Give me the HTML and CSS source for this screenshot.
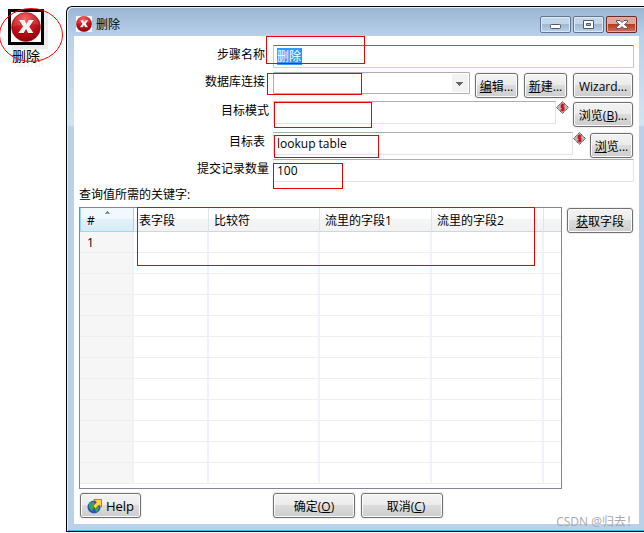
FILE: index.html
```html
<!DOCTYPE html>
<html lang="zh-CN">
<head>
<meta charset="utf-8">
<title>删除</title>
<link rel="stylesheet" href="styles.css">
</head>
<body>
<svg class="defs" width="0" height="0" aria-hidden="true">
  <defs>
    <radialGradient id="red" cx="45%" cy="25%" r="75%">
      <stop offset="0" stop-color="#ee5a50"/><stop offset=".45" stop-color="#d01820"/><stop offset="1" stop-color="#8c0008"/>
    </radialGradient>
    <symbol id="delete" viewBox="0 0 30 30">
      <rect width="30" height="30" fill="#fff"/>
      <circle cx="15" cy="15" r="14.5" fill="url(#red)" stroke="#a31a1c" stroke-width=".6"/>
      <path d="M2 15A13 13 0 0 1 28 13Q16 9 2 15Z" fill="#fff" opacity=".12"/>
      <path d="M8 9h6l2 3.400 2-3.400h5l-4.500 6.500L23 22h-6l-2-3.800L13 22H7.500l4.700-6.500Z" fill="#700" opacity=".6"/>
      <path d="M8 8h5.500l2 3.800 2.200-3.800H23l-4.700 6.700L22.500 21H17l-2-3.900-2.200 3.900H7.300l4.700-6.400Z" fill="#f4f4f4"/>
    </symbol>
    <symbol id="variable" viewBox="0 0 13 13">
      <path d="M6.500 .5 12.500 6.500 6.500 12.500 .5 6.500Z" fill="#b8b8b8" stroke="#555" stroke-dasharray="1.500 .6"/>
      <path d="M8.500 4H5.500v2.300h2.200V9H4.500M6.500 2.500v8" fill="none" stroke="#d00f16" stroke-width="1.500"/>
    </symbol>
  </defs>
</svg>
<div class="desktop">
  <aside class="step">
    <svg class="step-icon"><use href="#delete"/></svg>
    <span class="step-name">删除</span>
    <svg class="ring" viewBox="0 0 64 56" aria-hidden="true"><ellipse cx="31" cy="28" rx="31.500" ry="26.500" fill="none" stroke="#f00"/></svg>
  </aside>
  <main class="window">
    <header class="titlebar">
      <svg class="title-icon"><use href="#delete"/></svg>
      <h1>删除</h1>
      <div class="controls">
        <button class="control" aria-label="最小化"><svg viewBox="0 0 29 15"><rect x="9.500" y="7.500" width="10" height="4" rx="1" fill="#fff" stroke="#535666"/></svg></button>
        <button class="control" aria-label="最大化"><svg viewBox="0 0 29 15"><path fill-rule="evenodd" d="M9.500 3.500h10v8h-10ZM12.500 6.500v2h4v-2Z" fill="#fff" stroke="#535666"/></svg></button>
        <button class="control close" aria-label="关闭"><svg viewBox="0 0 29 15"><path d="M9.500 3.500h3.500l2 2 2-2h3.500v1.500l-3 2.500 3 2.500v1.500H17l-2-2-2 2H9.500V10l3-2.500-3-2.500Z" fill="#fff" stroke="#535666"/></svg></button>
      </div>
    </header>
    <form class="content" onsubmit="return false">
      <div class="row">
        <label for="name">步骤名称</label>
        <div class="field"><input id="name" class="focused" value="删除"><span class="selection" aria-hidden="true">删除</span><i class="mark mark-name"></i></div>
      </div>
      <div class="row row-connection">
        <label for="connection">数据库连接</label>
        <div class="field"><select id="connection"><option></option></select><i class="mark mark-connection"></i></div>
        <div class="buttons"><button class="btn small"><u>编</u>辑...</button><button class="btn small"><u>新</u>建...</button><button class="btn medium">Wizard...</button></div>
      </div>
      <div class="row row-schema">
        <label for="schema" class="wide">目标模式</label>
        <div class="field"><input id="schema"><i class="mark mark-schema"></i></div>
        <svg class="variable"><use href="#variable"/></svg>
        <button class="btn medium">浏览(<u>B</u>)...</button>
      </div>
      <div class="row">
        <label for="table">目标表</label>
        <div class="field"><input id="table" value="lookup table"><i class="mark mark-table"></i></div>
        <svg class="variable"><use href="#variable"/></svg>
        <button class="btn small"><u>浏</u>览...</button>
      </div>
      <div class="row">
        <label for="commit" class="wide">提交记录数量</label>
        <div class="field"><input id="commit" value="100"><i class="mark mark-commit"></i></div>
      </div>
      <p class="caption">查询值所需的关键字:</p>
      <div class="keys">
        <div class="grid-box">
          <table>
            <colgroup><col class="c-num"><col class="c-field"><col class="c-cmp"><col class="c-stream"><col class="c-stream"><col></colgroup>
            <thead><tr><th class="sorted">#</th><th>表字段</th><th>比较符</th><th>流里的字段1</th><th>流里的字段2</th><th></th></tr></thead>
            <tbody>
              <tr><td>1</td><td></td><td></td><td></td><td></td><td></td></tr>
              <tr><td></td><td></td><td></td><td></td><td></td><td></td></tr>
              <tr><td></td><td></td><td></td><td></td><td></td><td></td></tr>
              <tr><td></td><td></td><td></td><td></td><td></td><td></td></tr>
              <tr><td></td><td></td><td></td><td></td><td></td><td></td></tr>
              <tr><td></td><td></td><td></td><td></td><td></td><td></td></tr>
              <tr><td></td><td></td><td></td><td></td><td></td><td></td></tr>
              <tr><td></td><td></td><td></td><td></td><td></td><td></td></tr>
              <tr><td></td><td></td><td></td><td></td><td></td><td></td></tr>
              <tr><td></td><td></td><td></td><td></td><td></td><td></td></tr>
              <tr><td></td><td></td><td></td><td></td><td></td><td></td></tr>
              <tr><td></td><td></td><td></td><td></td><td></td><td></td></tr>
            </tbody>
          </table>
          <i class="mark mark-keys"></i>
        </div>
        <button class="btn fetch"><u>获</u>取字段</button>
      </div>
      <footer class="actions">
        <button class="btn help"><svg viewBox="0 0 16 16" width="16" height="16" aria-hidden="true"><circle cx="7" cy="9" r="6.500" fill="#2857bd"/><circle cx="5" cy="7" r="3" fill="#6b9be8" opacity=".7"/><path d="M2 6l3-2 2 2-1 2 1 2-2 3-2-2-1-3ZM9 8l3 1-1 4-2 1-1-3Z" fill="#35a84a"/><path d="M7 1.500h7.500V9L12 7 8.500 10.500 6 8l3.500-3.500Z" fill="#ffd34a" stroke="#a56a08" stroke-width=".8"/></svg>Help</button>
        <div class="decide"><button class="btn large">确定(<u>O</u>)</button><button class="btn large cancel">取消(<u>C</u>)</button></div>
      </footer>
    </form>
    <span class="watermark">CSDN @归去！</span>
  </main>
</div>
</body>
</html>
```
FILE: styles.css
```css
* { box-sizing: border-box; }
body {
  margin: 0;
  background: #fff;
  color: #000;
  font: 12px/16px "Open Sans", "Noto Sans CJK SC", sans-serif;
  overflow: hidden;
}
button, input, select { font: inherit; color: inherit; }
.defs { position: absolute; }
.desktop { display: flex; align-items: flex-start; padding-top: 6px; }

/* Step on the canvas */
.step {
  position: relative;
  flex: 0 0 66px;
  display: flex;
  flex-direction: column;
  align-items: flex-start;
  padding: 3px 0 0 8px;
}
.step-icon { width: 36px; height: 36px; border: 3px solid #000; box-shadow: 4px 4px 0 #ececec; }
.step-name { margin: 3px 0 0 4px; font-size: 14px; text-shadow: 4px 4px 0 #eee; }
.ring { position: absolute; left: 0; top: 1px; width: 64px; height: 56px; }

/* Window frame */
.window {
  position: relative;
  flex: 1;
  min-width: 0;
  padding: 0 5px 7px 6px;
  border: 1px solid #000;
  border-right: 0;
  border-radius: 6px 0 0 0;
  background: linear-gradient(#9ab5d2, #b9d1ea 30px, #d3e3f4 118px, #b9d1ea 120px);
  box-shadow: inset 1px 1px 0 #e4eef8, inset 0 -1px 0 #2cc5dc;
}
.titlebar { display: flex; align-items: flex-start; height: 29px; padding: 9px 2px 0 3px; }
.title-icon { width: 16px; height: 16px; }
h1 { flex: 1; margin: 1px 0 0 4px; font-size: 12px; font-weight: 400; line-height: 16px; }
.controls { display: flex; gap: 2px; }
.control {
  width: 31px;
  height: 17px;
  padding: 0;
  border: 1px solid #65778f;
  border-radius: 2px;
  background: linear-gradient(#c4d6ea 45%, #9fb9d5 50%, #b9d0e8);
  box-shadow: inset 0 0 0 1px #dce9f6;
}
.control svg { display: block; width: 29px; height: 15px; }
.close { border-color: #6d2b25; background: linear-gradient(#dfa79b 45%, #b83a22 50%, #d3705b); box-shadow: inset 0 0 0 1px #e5aca2; }

/* Form */
.content { margin-left: 1px; padding: 9px 5px 6px; background: #fff; }
.row { display: flex; align-items: flex-start; min-height: 27px; }
.row-connection { min-height: 29px; }
.row-schema { min-height: 31px; }
.row > label { flex: 0 0 194px; padding: 2px 8px 0 0; text-align: right; }
.row > label.wide { padding-right: 4px; }
.field { position: relative; flex: 1; min-width: 0; }
.field input, .field select {
  display: block;
  width: 100%;
  height: 23px;
  margin: 0;
  padding: 0 3px 1px;
  border: 1px solid #e3e3e6;
  border-top-color: #abadb3;
  border-radius: 1px;
  background: #fff;
  outline: 0;
}
.field input.focused { border-color: #3d7bad #a9cbe3 #b7d9ed #b5cfe7; padding: 1px 3px 0; color: transparent; }
.selection { position: absolute; left: 4px; top: 3px; height: 17px; line-height: 18px; background: #39f; color: #fff; border-right: 1px solid #c66a10; }
.field select {
  appearance: none;
  height: 22px;
  border-color: #abadb3;
  background:
    linear-gradient(#666, #666) right 6px top 9px / 7px 1px no-repeat,
    linear-gradient(#666, #666) right 7px top 10px / 5px 1px no-repeat,
    linear-gradient(#666, #666) right 8px top 11px / 3px 1px no-repeat,
    linear-gradient(#666, #666) right 9px top 12px / 1px 1px no-repeat,
    linear-gradient(#f2f2f2, #f2f2f2) right 1px top 1px / 16px 18px no-repeat,
    #fff;
}
.variable { flex: none; width: 13px; height: 13px; }
.btn {
  flex: none;
  height: 25px;
  margin: 1px 1px 0 0;
  padding: 2px 0 0;
  border: 1px solid #707070;
  border-radius: 3px;
  background: linear-gradient(#f3f3f3, #ebebeb 48%, #dcdcdc 50%, #cdcdcd);
  box-shadow: inset 0 0 0 1px #fbfbfb, 0 0 0 1px #f0f0f0;
  white-space: nowrap;
}
.buttons { display: flex; gap: 5px; margin-left: 5px; }
.variable + .btn { margin-left: 4px; }
.small { width: 43px; }
.medium { width: 60px; }
.large { width: 82px; }

/* Keys table */
.caption { margin: 1px 0 4px; }
.keys { display: flex; align-items: flex-start; gap: 5px; }
.grid-box { position: relative; flex: 1; min-width: 0; padding-bottom: 4px; border: 1px solid #828790; }
table { width: 100%; table-layout: fixed; border-collapse: separate; border-spacing: 0; }
.c-num { width: 54px; }
.c-field { width: 75px; }
.c-cmp { width: 111px; }
.c-stream { width: 112px; }
th, td { padding: 2px 0 0 5px; text-align: left; font-weight: 400; white-space: nowrap; }
th {
  height: 24px;
  border-right: 1px solid #e2e3e6;
  border-bottom: 1px solid #d5d5d5;
  background: linear-gradient(#fff 45%, #f4f5f7 50%, #f1f2f4);
}
th:last-child { border-right: 0; }
th.sorted {
  padding-left: 6px;
  border: 1px solid #96d9f9;
  border-top: 0;
  background:
    linear-gradient(#4f87a5, #4f87a5) 26px 3px / 1px 1px no-repeat,
    linear-gradient(#4f87a5, #4f87a5) 25px 4px / 3px 1px no-repeat,
    linear-gradient(#79aec9, #79aec9) 24px 5px / 5px 1px no-repeat,
    linear-gradient(#f2f9fc 45%, #e1f1f9 50%, #d8ecf6);
}
td { height: 21px; border-right: 2px solid #edf2fb; border-bottom: 1px solid #eee; }
td:first-child { padding-left: 7px; background: #f6f6f6; }
td:last-child { border-right: 0; }
.fetch { width: 66px; }

/* Footer */
.actions { display: flex; margin-top: 3px; }
.help { display: flex; align-items: center; justify-content: center; gap: 3px; width: 61px; margin-left: 1px; padding-top: 0; font-size: 13px; }
.decide { display: flex; gap: 5px; margin-left: 131px; }
.cancel { padding-left: 8px; }

/* Red annotation frames */
.mark { position: absolute; border: 1px solid #f00000; pointer-events: none; }
.mark-name { left: -7px; top: -9px; width: 99px; height: 28px; }
.mark-connection { left: -6px; top: 1px; width: 95px; height: 22px; }
.mark-schema { left: 1px; top: 1px; width: 98px; height: 26px; }
.mark-table { left: 1px; top: 3px; width: 105px; height: 23px; }
.mark-commit { left: 0; top: 4px; width: 70px; height: 26px; }
.mark-keys { left: 57px; top: -1px; width: 398px; height: 59px; }
.watermark { position: absolute; right: 6px; bottom: 1px; color: #a9a9ad; }
```
